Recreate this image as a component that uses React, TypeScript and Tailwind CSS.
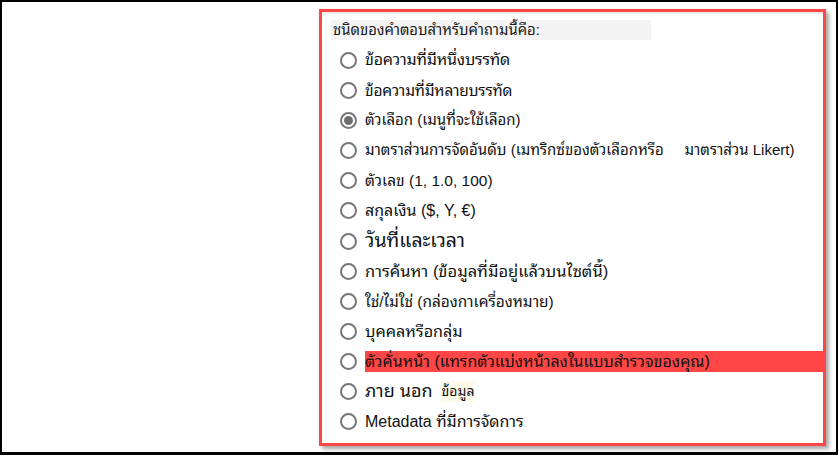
const OPTIONS: { label: React.ReactNode; selected?: boolean; size?: string; highlight?: boolean }[] = [
  { label: 'ข้อความที่มีหนึ่งบรรทัด', size: 'text-[16px] tracking-[-0.2px]' },
  { label: 'ข้อความที่มีหลายบรรทัด', size: 'text-[15.5px] tracking-[-0.2px]' },
  { label: 'ตัวเลือก (เมนูที่จะใช้เลือก)', selected: true, size: 'text-[15px]' },
  { label: 'มาตราส่วนการจัดอันดับ (เมทริกซ์ของตัวเลือกหรือ\u00a0\u00a0\u00a0\u00a0 มาตราส่วน Likert)', size: 'text-[15px]' },
  { label: 'ตัวเลข (1, 1.0, 100)', size: 'text-[15.5px]' },
  { label: 'สกุลเงิน  ($, Y, €)', size: 'text-[16px]' },
  { label: 'วันที่และเวลา', size: 'text-[19.5px]' },
  { label: 'การค้นหา (ข้อมูลที่มีอยู่แล้วบนไซต์นี้)', size: 'text-[16.5px]' },
  { label: 'ใช่/ไม่ใช่ (กล่องกาเครื่องหมาย)', size: 'text-[15.4px]' },
  { label: 'บุคคลหรือกลุ่ม', size: 'text-[16.2px]' },
  { label: 'ตัวคั่นหน้า (แทรกตัวแบ่งหน้าลงในแบบสำรวจของคุณ)', highlight: true, size: 'text-[16px]' },
  {
    label: (
      <>
        <span className="text-[18px]">ภาย นอก</span>
        <span className="ml-[9px] bg-[#fffbea] text-[14px]">ข้อมูล</span>
      </>
    ),
  },
  { label: 'Metadata ที่มีการจัดการ', size: 'text-[16px]' },
];

function Radio({ selected }: { selected?: boolean }) {
  return (
    <span className="flex size-[17px] shrink-0 items-center justify-center rounded-full border-2 border-[#777] bg-white">
      {selected && <span className="size-[9px] rounded-full bg-[#6e6e6e]" />}
    </span>
  );
}

export default function App() {
  return (
    <div
      className="h-[456px] w-[839px] overflow-hidden bg-white"
      style={{ fontFamily: '"Liberation Sans", "Noto Sans Thai Looped", "Noto Sans Thai", sans-serif' }}
    >
      <div className="h-[455px] w-[838px] border-2 border-b-[3px] border-black">
        <div className="ml-[317px] mt-[7px] h-[437px] w-[507px] border-[3px] border-[#ff4646] bg-white shadow-[3px_3px_4px_rgba(0,0,0,0.35)]">
          <div className="pt-[8px] shadow-[inset_0_3px_3px_-2px_rgba(0,0,0,0.15)]">
            <div className="ml-[9px] flex h-[20px] w-[320px] items-center bg-[#f4f4f4] pl-[2px] text-[14.8px] text-[#1a1a1a]">
              ชนิดของคำตอบสำหรับคำถามนี้คือ:
            </div>
            <div className="mt-[5px] flex flex-col">
              {OPTIONS.map((o, i) => (
                <div key={i} className="flex h-[30.17px] items-center pl-[18px]">
                  <Radio selected={o.selected} />
                  <div
                    className={`ml-[8px] flex h-[21px] flex-1 items-center text-[#111] ${o.size ?? 'text-[15px]'} ${
                      o.highlight ? 'bg-[#ff4646]' : ''
                    }`}
                  >
                    {o.label}
                  </div>
                </div>
              ))}
            </div>
          </div>
        </div>
      </div>
    </div>
  );
}
